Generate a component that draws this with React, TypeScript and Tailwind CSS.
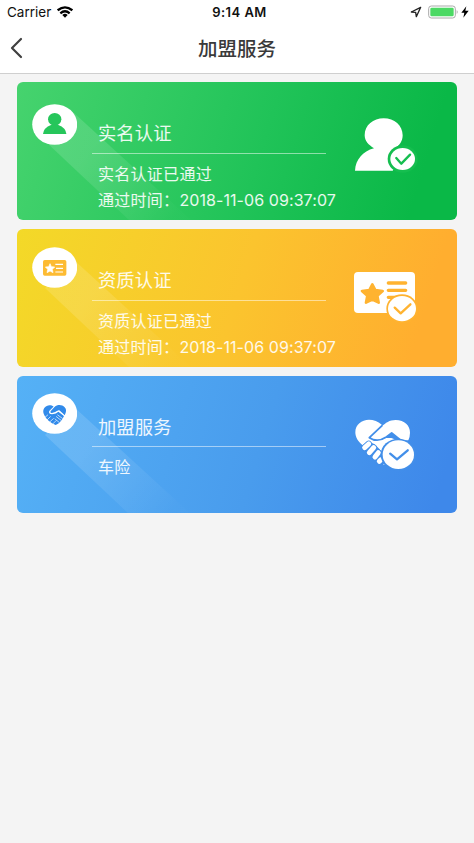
import React from "react";

const FONT = "font-['Inter','Noto_Sans_CJK_SC',sans-serif]";

function StatusBar() {
  return (
    <div className="grid h-6 grid-cols-3 items-center pl-[7px] pr-[5px] text-[13.5px] leading-6 text-[#111]">
      <div className="flex items-center gap-[6px]">
        <span className="tracking-[0px]">Carrier</span>
        <svg width="16" height="12" viewBox="0 0 48 36" fill="none" stroke="#000" strokeWidth="7">
          <path d="M2 13Q24 -5 46 13" />
          <path d="M10 22Q24 10 38 22" />
          <path d="M16 27Q24 20 32 27L24 35Z" fill="#000" stroke="none" />
        </svg>
      </div>
      <div className="whitespace-nowrap pl-[3px] text-center text-[13px] font-semibold tracking-[0.45px]">9:14 AM</div>
      <div className="flex items-center justify-end">
        <svg width="12" height="12" viewBox="0 0 36 36" fill="none" stroke="#222" strokeWidth="4" strokeLinejoin="round">
          <path d="M32 4L4 18L17 19L19 32Z" />
        </svg>
        <svg className="ml-[6px]" width="31" height="14" viewBox="0 0 93 42">
          <rect x="2" y="3" width="80" height="36" rx="8" fill="#fff" stroke="#aaa" strokeWidth="3" />
          <rect x="7" y="8" width="70" height="26" rx="4" fill="#4cd964" />
          <path d="M86 15Q92 21 86 27Z" fill="#aaa" />
        </svg>
        <svg className="ml-[2px]" width="8" height="12" viewBox="0 0 24 36" fill="#000">
          <path d="M16 1L1 20H10L7 35L23 14H13Z" />
        </svg>
      </div>
    </div>
  );
}

function PersonBadge() {
  return (
    <g fill="#26c65b">
      <ellipse cx="68" cy="46" rx="20" ry="19" />
      <path d="M33 90Q35 71 57 63H79Q101 71 103 90Z" />
    </g>
  );
}

function CardBadge() {
  return (
    <g>
      <rect x="33" y="39" width="70" height="47" rx="5" fill="#fdbb32" />
      <path d="M54 50L58 59L68 60L61 67L63 77L54 72L45 77L47 67L40 60L50 59Z" fill="#fff" stroke="#fff" strokeWidth="2" strokeLinejoin="round" />
      <path d="M70 52H93M72 64H93M70 75H93" stroke="#fff" strokeWidth="3.5" />
    </g>
  );
}

function HandsBadge() {
  return (
    <g fill="#318aea">
      <path d="M35 62C28 42 51 29 65 41L52 55Q49 64 60 64Q73 62 79 56L96 69C91 81 83 91 71 96C59 91 41 79 35 62Z" />
      <path d="M68 41C82 29 108 40 101 59L98 67L82 52L74 55Q66 61 58 60Q52 58 57 53Z" />
      <g fill="none" stroke="#fff" strokeWidth="2" strokeLinecap="round">
        <path d="M67 40L53 54Q51 63 62 61Q73 58 79 53L98 69" />
        <path d="M39 73L47 66M46 80L55 71M53 87L64 77M61 94L72 83M73 71L86 81M69 78L80 87M77 66L91 76" />
      </g>
    </g>
  );
}

function Tick({ cx, cy, rx, ry, color }: { cx: number; cy: number; rx: number; ry: number; color: string }) {
  return (
    <g>
      <ellipse cx={cx} cy={cy} rx={rx} ry={ry} fill="#fff" />
      <path d={`M${cx - rx * 0.52} ${cy - 3}L${cx - 4} ${cy + 14}L${cx + rx * 0.6} ${cy - 13}`} fill="none" stroke={color} strokeWidth="7" strokeLinecap="round" strokeLinejoin="round" />
    </g>
  );
}

function PersonArt() {
  return (
    <svg width="72" height="64" viewBox="0 0 216 192" className="mt-[32.5px]">
      <path d="M21 167C23 134 44 109 78 100C62 90 50 78 50 61C50 30 76 10 107 10C139 10 164 32 164 61C164 78 155 90 142 100L158 106V132L134 167Z" fill="#fff" />
      <ellipse cx="164" cy="132" rx="45" ry="41" fill="#15be4f" />
      <Tick cx={164} cy={132} rx={37} ry={33} color="#15be4f" />
    </svg>
  );
}

function CertificateArt() {
  return (
    <svg width="72" height="64" viewBox="0 0 216 192" className="mt-[35px]">
      <rect x="18" y="24" width="183" height="123" rx="12" fill="#fff" />
      <path d="M73 61L82 78L104 81L88 95L92 116L73 107L54 116L58 95L42 81L64 78Z" fill="#ffb330" stroke="#ffb330" strokeWidth="8" strokeLinejoin="round" />
      <path d="M121 57H173M121 79H173M121 100H165" stroke="#ffb330" strokeWidth="10" strokeLinecap="round" />
      <ellipse cx="162" cy="134" rx="47" ry="43" fill="#ffb330" />
      <Tick cx={162} cy={134} rx={42} ry={38} color="#ffb330" />
    </svg>
  );
}

function HandsArt() {
  return (
    <svg width="72" height="64" viewBox="0 0 216 192" className="mt-[34.5px]">
      <path d="M44 106C30 94 22 82 22 67C22 30 70 15 103 46L76 84H130L160 95V140H112L95 118L80 103L64 95Q53 96 44 106Z" fill="#fff" />
      <path d="M66 84L102 49C113 39 124 30 143 30C170 30 186 47 186 68Q186 80 181 91L160 91L131 69L116 81Q90 99 66 84Z" fill="#fff" />
      <path d="M103 46L64 83Q88 99 115 81L131 69L160 92" fill="none" stroke="#438fe9" strokeWidth="5.5" strokeLinejoin="round" />
      <path d="M50 113L62 102M64 128L77 113M81 141L91 128M94 154L98 150" stroke="#438fe9" strokeWidth="20" strokeLinecap="round" />
      <path d="M50 113L62 102M64 128L77 113M81 141L91 128M94 154L98 150" stroke="#fff" strokeWidth="15" strokeLinecap="round" />
      <path d="M107 163H111" stroke="#9cc6f5" strokeWidth="4" strokeLinecap="round" />
      <ellipse cx="151" cy="134" rx="53" ry="48" fill="#438fe9" />
      <Tick cx={151} cy={134} rx={47} ry={43} color="#438fe9" />
    </svg>
  );
}

interface ServiceCardProps {
  tone: string;
  beam: string;
  badgeOffset: string;
  badge: React.ReactNode;
  title: string;
  lines: string[];
  date?: string;
  art: React.ReactNode;
}

function ServiceCard({ tone, beam, badgeOffset, badge, title, lines, date, art }: ServiceCardProps) {
  return (
    <section className={`relative flex h-[137.6px] items-start overflow-hidden rounded-[6px] text-white ${tone}`}>
      <svg className="absolute inset-0" width="440" height="138" viewBox="0 0 440 138">
        <defs>
          <linearGradient id={beam} x1="35" y1="45" x2="150" y2="142" gradientUnits="userSpaceOnUse">
            <stop offset="0" stopColor="#fff" stopOpacity="0.13" />
            <stop offset="0.3" stopColor="#fff" stopOpacity="0.13" />
            <stop offset="1" stopColor="#fff" stopOpacity="0.01" />
          </linearGradient>
        </defs>
        <path d="M28 59L57 31L174 138H112Z" fill={`url(#${beam})`} />
      </svg>
      <svg className={`relative ml-[14.5px] shrink-0 ${badgeOffset}`} width="45.4" height="41" viewBox="0 0 136 123">
        <ellipse cx="68" cy="61.5" rx="67.5" ry="61" fill="#fff" />
        {badge}
      </svg>
      <div className="relative ml-[15px] w-[234px] shrink-0 pt-[37px]">
        <h2 className="h-[33.5px] pl-[6px] text-[18.3px] font-normal leading-7 tracking-[0.2px] text-white/90">{title}</h2>
        <div className="h-px bg-white/50" />
        <div className="whitespace-nowrap pl-[6px] pt-[7px] text-[16px] font-normal leading-[26.3px] tracking-[0.3px] text-white/90">
          {lines.map((line) => (
            <p key={line}>
              {line}
              {line.endsWith("：") && <span className="font-normal tracking-[0.08px]">{date}</span>}
            </p>
          ))}
        </div>
      </div>
      <div className="relative ml-[22px] shrink-0">{art}</div>
    </section>
  );
}

export default function App() {
  return (
    <div className={`min-h-[843px] w-full bg-[#f4f4f4] ${FONT}`}>
      <header className="h-[74px] border-b border-[#cfcfcf] bg-white">
        <StatusBar />
        <div className="flex h-12 items-center justify-between px-[10px]">
          <svg width="14" height="22" viewBox="0 0 14 22" fill="none" stroke="#404040" strokeWidth="2.2" strokeLinecap="round" strokeLinejoin="round">
            <path d="M11 2L2 11L11 20" />
          </svg>
          <h1 className="pt-px text-[19.5px] font-medium leading-7 text-[#3a3a3a]">加盟服务</h1>
          <span className="w-[14px]" />
        </div>
      </header>
      <main className="flex flex-col gap-[9.1px] px-[17px] pt-[8.4px]">
        <ServiceCard
          tone="bg-[linear-gradient(107deg,#46d36e_0%,#20c358_55%,#0ab847_90%)]"
          beam="beam-green"
          badgeOffset="mt-[21.5px]"
          badge={<PersonBadge />}
          title="实名认证"
          lines={["实名认证已通过", "通过时间："]}
          date="2018-11-06 09:37:07"
          art={<PersonArt />}
        />
        <ServiceCard
          tone="bg-[linear-gradient(107deg,#f3d928_0%,#fbc42e_50%,#ffae2f_90%)]"
          beam="beam-yellow"
          badgeOffset="mt-[18px]"
          badge={<CardBadge />}
          title="资质认证"
          lines={["资质认证已通过", "通过时间："]}
          date="2018-11-06 09:37:07"
          art={<CertificateArt />}
        />
        <ServiceCard
          tone="bg-[linear-gradient(107deg,#55b1f6_0%,#499ced_55%,#3e88ea_95%)]"
          beam="beam-blue"
          badgeOffset="mt-[17.5px]"
          badge={<HandsBadge />}
          title="加盟服务"
          lines={["车险"]}
          art={<HandsArt />}
        />
      </main>
    </div>
  );
}
